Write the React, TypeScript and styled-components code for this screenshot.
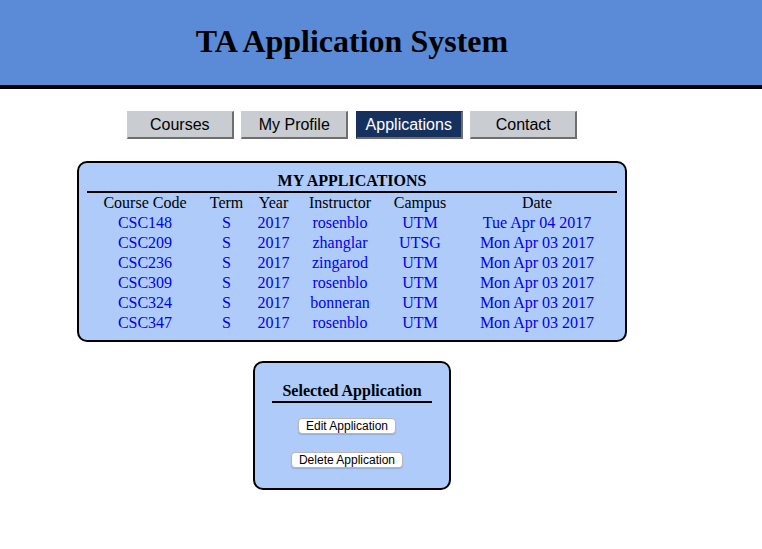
import React from "react"
import styled, { createGlobalStyle } from "styled-components"

const GlobalStyle = createGlobalStyle`
  html, body {
    margin: 0;
    padding: 0;
    background: #ffffff;
  }
  body {
    font-family: "Liberation Serif", "Times New Roman", serif;
    color: #000000;
  }
`

const serif = `"Liberation Serif", "Times New Roman", serif`
const sans = `"Liberation Sans", Arial, Helvetica, sans-serif`

const Header = styled.header`
  height: 85px;
  background: #5b8bd6;
  border-bottom: 4px solid #000000;
`

const HeaderInner = styled.div`
  width: 704px;
  height: 100%;
  display: flex;
  align-items: center;
  justify-content: center;
`

const Title = styled.h1`
  margin: 0 0 4px 0;
  font-family: ${serif};
  font-size: 32px;
  font-weight: bold;
  line-height: 36px;
`

const Main = styled.main`
  width: 704px;
  display: flex;
  flex-direction: column;
  align-items: center;
`

const Nav = styled.nav`
  display: flex;
  gap: 7.5px;
  margin-top: 22px;
`

const NavButton = styled.button<{ $active?: boolean }>`
  box-sizing: border-box;
  width: 107px;
  height: 28px;
  padding: 0;
  font-family: ${sans};
  font-size: 16px;
  color: ${({ $active }) => ($active ? "#ffffff" : "#000000")};
  background: ${({ $active }) => ($active ? "#17315f" : "#c9ccd1")};
  border-style: solid;
  border-width: 1px 2px 2px 1px;
  border-color: ${({ $active }) =>
    $active ? "#17315f #6e6e6e #6e6e6e #17315f" : "#c9ccd1 #6e6e6e #6e6e6e #c9ccd1"};
  cursor: pointer;
`

const Panel = styled.section<{ $width: number }>`
  box-sizing: border-box;
  width: ${({ $width }) => $width}px;
  background: #aecbfa;
  border: 2px solid #000000;
  border-radius: 10px;
`

const TablePanel = styled(Panel)`
  margin-top: 22px;
  padding: 8px 8px 7px;
`

const PanelTitle = styled.h2`
  margin: 0;
  font-family: ${serif};
  font-size: 16px;
  font-weight: bold;
  line-height: 20px;
  text-align: center;
  border-bottom: 2px solid #000000;
`

const Table = styled.table`
  width: 530px;
  border-collapse: collapse;
  table-layout: fixed;
  font-family: ${serif};
  font-size: 16px;
  line-height: 20px;
`

const HeadCell = styled.th`
  padding: 0;
  font-weight: normal;
  color: #000000;
  text-align: center;
`

const Cell = styled.td`
  padding: 0;
  color: #0000ee;
  text-align: center;
  white-space: nowrap;
`

const SelectedPanel = styled(Panel)`
  margin-top: 19px;
  height: 129px;
  padding-top: 18px;
  display: flex;
  flex-direction: column;
  align-items: center;
`

const SelectedTitle = styled.h3`
  margin: 0;
  padding: 0 10px;
  font-family: ${serif};
  font-size: 16px;
  font-weight: bold;
  line-height: 20px;
  border-bottom: 2px solid #000000;
`

const ActionButton = styled.button<{ $gap: number }>`
  box-sizing: border-box;
  height: 16px;
  margin: ${({ $gap }) => $gap}px 10px 0 0;
  padding: 0 7px;
  font-family: ${sans};
  font-size: 12px;
  line-height: 14px;
  color: #000000;
  background: #ffffff;
  border: 1px solid #b5b5b5;
  border-radius: 4px;
  box-shadow: 0 1px 1px rgba(0, 0, 0, 0.15);
  cursor: pointer;
`

const columns = [
  { label: "Course Code", width: 116 },
  { label: "Term", width: 47 },
  { label: "Year", width: 47 },
  { label: "Instructor", width: 86 },
  { label: "Campus", width: 74 },
  { label: "Date", width: 160 },
]

const applications = [
  ["CSC148", "S", "2017", "rosenblo", "UTM", "Tue Apr 04 2017"],
  ["CSC209", "S", "2017", "zhanglar", "UTSG", "Mon Apr 03 2017"],
  ["CSC236", "S", "2017", "zingarod", "UTM", "Mon Apr 03 2017"],
  ["CSC309", "S", "2017", "rosenblo", "UTM", "Mon Apr 03 2017"],
  ["CSC324", "S", "2017", "bonneran", "UTM", "Mon Apr 03 2017"],
  ["CSC347", "S", "2017", "rosenblo", "UTM", "Mon Apr 03 2017"],
]

const tabs = ["Courses", "My Profile", "Applications", "Contact"]

export default function App() {
  return (
    <>
      <GlobalStyle />
      <Header>
        <HeaderInner>
          <Title>TA Application System</Title>
        </HeaderInner>
      </Header>
      <Main>
        <Nav>
          {tabs.map((tab) => (
            <NavButton key={tab} $active={tab === "Applications"}>
              {tab}
            </NavButton>
          ))}
        </Nav>

        <TablePanel $width={550}>
          <PanelTitle>MY APPLICATIONS</PanelTitle>
          <Table>
            <colgroup>
              {columns.map((col) => (
                <col key={col.label} style={{ width: col.width }} />
              ))}
            </colgroup>
            <thead>
              <tr>
                {columns.map((col) => (
                  <HeadCell key={col.label}>{col.label}</HeadCell>
                ))}
              </tr>
            </thead>
            <tbody>
              {applications.map((row) => (
                <tr key={row[0]}>
                  {row.map((value, i) => (
                    <Cell key={i}>{value}</Cell>
                  ))}
                </tr>
              ))}
            </tbody>
          </Table>
        </TablePanel>

        <SelectedPanel $width={198}>
          <SelectedTitle>Selected Application</SelectedTitle>
          <ActionButton $gap={15}>Edit Application</ActionButton>
          <ActionButton $gap={18}>Delete Application</ActionButton>
        </SelectedPanel>
      </Main>
    </>
  )
}
